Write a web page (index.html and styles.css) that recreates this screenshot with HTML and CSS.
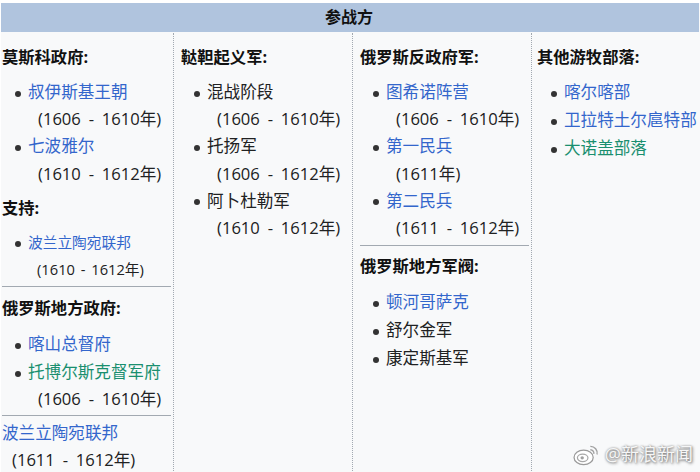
FILE: index.html
```html
<!DOCTYPE html>
<html lang="zh">
<head>
<meta charset="utf-8">
<title>参战方</title>
<link rel="stylesheet" href="styles.css">
</head>
<body>
<div class="table">
  <div class="title">参战方</div>
  <div class="columns">
    <section class="col first">
      <h3 class="head">莫斯科政府:</h3>
      <ul class="list">
        <li class="item"><a class="link">叔伊斯基王朝</a><span class="years">(1606 - 1610年)</span></li>
        <li class="item"><a class="link">七波雅尔</a><span class="years">(1610 - 1612年)</span></li>
      </ul>
      <h3 class="head support">支持:</h3>
      <ul class="list small">
        <li class="item"><a class="link">波兰立陶宛联邦</a><span class="years">(1610 - 1612年)</span></li>
      </ul>
      <hr class="rule">
      <h3 class="head after-rule">俄罗斯地方政府:</h3>
      <ul class="list">
        <li class="item"><a class="link">喀山总督府</a></li>
        <li class="item"><a class="link green">托博尔斯克督军府</a><span class="years">(1606 - 1610年)</span></li>
      </ul>
      <hr class="rule wide">
      <div class="plain"><a class="link">波兰立陶宛联邦</a><span class="years">(1611 - 1612年)</span></div>
    </section>
    <section class="col">
      <h3 class="head">鞑靼起义军:</h3>
      <ul class="list">
        <li class="item">混战阶段<span class="years">(1606 - 1610年)</span></li>
        <li class="item">托扬军<span class="years">(1606 - 1612年)</span></li>
        <li class="item">阿卜杜勒军<span class="years">(1610 - 1612年)</span></li>
      </ul>
    </section>
    <section class="col">
      <h3 class="head">俄罗斯反政府军:</h3>
      <ul class="list">
        <li class="item"><a class="link">图希诺阵营</a><span class="years">(1606 - 1610年)</span></li>
        <li class="item"><a class="link">第一民兵</a><span class="years">(1611年)</span></li>
        <li class="item"><a class="link">第二民兵</a><span class="years">(1611 - 1612年)</span></li>
      </ul>
      <hr class="rule wide">
      <h3 class="head after-rule">俄罗斯地方军阀:</h3>
      <ul class="list">
        <li class="item"><a class="link">顿河哥萨克</a></li>
        <li class="item">舒尔金军</li>
        <li class="item">康定斯基军</li>
      </ul>
    </section>
    <section class="col last">
      <h3 class="head">其他游牧部落:</h3>
      <ul class="list">
        <li class="item"><a class="link">喀尔喀部</a></li>
        <li class="item"><a class="link">卫拉特土尔扈特部</a></li>
        <li class="item"><a class="link green">大诺盖部落</a></li>
      </ul>
    </section>
  </div>
  <div class="mark">
    <svg class="mark-icon" viewBox="0 0 28 24" width="27" height="23" aria-hidden="true">
      <ellipse cx="11" cy="15" rx="10" ry="7.5" fill="#fff" stroke="#9a9a9a" stroke-width="1.3"/>
      <ellipse cx="10" cy="15.5" rx="5.5" ry="4" fill="none" stroke="#a8a8a8" stroke-width="1.3"/>
      <circle cx="9.5" cy="15.5" r="1.8" fill="#a0a0a0"/>
      <path d="M18 3.5a7 7 0 0 1 7 8.5M18 7a3.6 3.6 0 0 1 3.6 4.4" fill="none" stroke="#a0a0a0" stroke-width="1.4"/>
    </svg>
    <span class="mark-text">@新浪新闻</span>
  </div>
</div>
</body>
</html>
```
FILE: styles.css
```css
html, body {
  margin: 0;
  padding: 0;
  background: #fff;
}
body {
  width: 700px;
  height: 472px;
  overflow: hidden;
  font-family: "Open Sans", "Noto Sans CJK SC", sans-serif;
  font-size: 16.6px;
  color: #202122;
}
.table {
  position: relative;
  height: 469px;
  margin-top: 3px;
  margin-left: 1px;
  width: 699px;
  background: #f8f9fa;
  overflow: hidden;
}
.title {
  height: 29px;
  line-height: 29px;
  margin-right: 1px;
  padding-right: 2px;
  background: #b0c4de;
  text-align: center;
  font-weight: 700;
  font-size: 16px;
  color: #111;
}
.columns {
  display: grid;
  grid-template-columns: 172px 179px 179px 1fr;
  height: 440px;
  margin-top: 1px;
}
.col {
  padding: 0 2px 0 7px;
  border-left: 1px dotted #a2a9b1;
}
.col.first {
  padding-left: 1px;
  border-left: 0;
}
.col.last {
  padding-left: 5px;
  padding-right: 0;
}
.head {
  margin: 12px 0 0;
  height: 24px;
  line-height: 24px;
  font-size: 16.3px;
  font-weight: 700;
  color: #111;
}
.head.support {
  margin-top: 9px;
}
.head.after-rule {
  margin-top: 8px;
}
.first .head.after-rule {
  margin-top: 9px;
}
.list {
  margin: 9px 0 0;
  padding: 0 0 0 26px;
  list-style: none;
}
.last .list {
  padding-left: 27px;
}
.head.after-rule + .list {
  margin-top: 10px;
}
.item {
  min-height: 28px;
  line-height: 27.2px;
  white-space: nowrap;
}
.item::before {
  content: "";
  display: inline-block;
  width: 6px;
  height: 6px;
  margin-left: -13px;
  margin-right: 7px;
  border-radius: 50%;
  background: #333;
  vertical-align: middle;
}
.years {
  display: block;
  padding-left: 10px;
  word-spacing: 3.5px;
  color: #202122;
}
.list.small {
  margin-top: 9px;
  font-size: 14.7px;
}
.small .years {
  padding-left: 9px;
  word-spacing: 2px;
}
.link {
  color: #3366cc;
}
.green {
  color: #1a8f6f;
}
.rule {
  height: 1px;
  margin: 3px 0 0;
  border: 0;
  background: #a2a9b1;
}
.rule.wide {
  margin-top: 4px;
}
.first .rule.wide {
  margin-top: 2px;
}
.plain {
  margin-top: 3px;
  line-height: 27px;
}
.plain .years {
  padding-left: 10px;
}
.mark {
  position: absolute;
  right: 7px;
  bottom: 6px;
  display: flex;
  align-items: center;
  gap: 5px;
}
.mark-text {
  font-size: 18px;
  line-height: 24px;
  color: #f6f6f6;
  text-shadow: 1px 1px 3px #666, 0 0 2px #999;
}
```
